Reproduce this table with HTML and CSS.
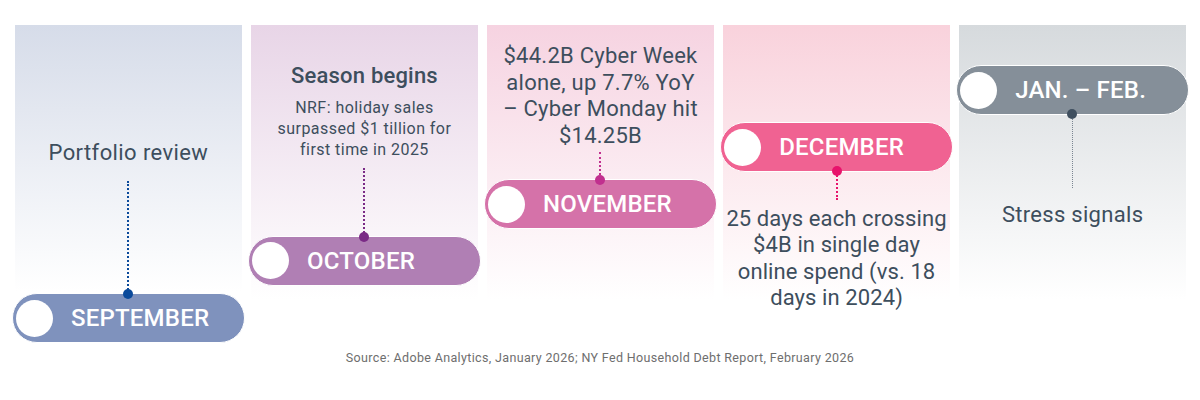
FILE: index.html
```html
<!DOCTYPE html>
<html lang="en">
<head>
<meta charset="utf-8">
<title>Holiday timeline</title>
<link rel="stylesheet" href="styles.css">
</head>
<body>
<div class="timeline">
  <div class="col col-sep">
    <div class="caption cap-sep">Portfolio review</div>
    <div class="connector conn-sep"><span class="dot dot-bottom"></span></div>
    <div class="pill"><span class="knob"></span><span class="label">SEPTEMBER</span></div>
  </div>
  <div class="col col-oct">
    <div class="caption cap-oct">Season begins</div>
    <div class="sub">NRF: holiday sales<br>surpassed $1 tillion for<br>first time in 2025</div>
    <div class="connector conn-oct"><span class="dot dot-bottom"></span></div>
    <div class="pill"><span class="knob"></span><span class="label">OCTOBER</span></div>
  </div>
  <div class="col col-nov">
    <div class="caption cap-nov">$44.2B Cyber Week<br>alone, up 7.7% YoY<br>– Cyber Monday hit<br>$14.25B</div>
    <div class="connector conn-nov"><span class="dot dot-bottom"></span></div>
    <div class="pill"><span class="knob"></span><span class="label">NOVEMBER</span></div>
  </div>
  <div class="col col-dec">
    <div class="pill"><span class="knob"></span><span class="label">DECEMBER</span></div>
    <div class="connector conn-dec"><span class="dot dot-top"></span></div>
    <div class="caption cap-dec">25 days each crossing<br>$4B in single day<br>online spend (vs. 18<br>days in 2024)</div>
  </div>
  <div class="col col-jan">
    <div class="pill"><span class="knob"></span><span class="label">JAN. – FEB.</span></div>
    <div class="connector conn-jan"><span class="dot dot-top"></span></div>
    <div class="caption cap-jan">Stress signals</div>
  </div>
</div>
<p class="source">Source: Adobe Analytics, January 2026; NY Fed Household Debt Report, February 2026</p>
</body>
</html>
```

FILE: styles.css
```css
* { box-sizing: border-box; }
html, body { margin: 0; padding: 0; background: #ffffff; }
body {
  width: 1200px;
  height: 400px;
  font-family: Roboto, "Liberation Sans", sans-serif;
  color: #3d4e5d;
  overflow: hidden;
}
.timeline {
  display: flex;
  gap: 9.25px;
  padding: 25px 14px 0 15px;
}
.col {
  flex: 1;
  height: 275px;
  display: flex;
  flex-direction: column;
  align-items: stretch;
}
.col > * { flex-shrink: 0; }
.col-sep { background: linear-gradient(#d6dce9, #ffffff 97%); padding-top: 115px; --c: #7f92bd; --d: #0b4a9b; }
.col-oct { background: linear-gradient(#e8d5e7, #ffffff 100%); padding-top: 38px; --c: #b07fb4; --d: #7a2a86; }
.col-nov { background: linear-gradient(#f6d3e1, #ffffff 100%); padding-top: 18px; --c: #d572a9; --d: #c1308f; }
.col-dec { background: linear-gradient(#f9d2dc, #ffffff 100%); padding-top: 97px; --c: #f06292; --d: #e8136c; }
.col-jan { background: linear-gradient(#d6dadd, #ffffff 100%); padding-top: 40px; --c: #858f99; --d: #3f4f5f; }

.caption {
  text-align: center;
  font-size: 22px;
  line-height: 26px;
  font-weight: 400;
  letter-spacing: 0.25px;
  white-space: nowrap;
}
.cap-sep { letter-spacing: 0.4px; }
.cap-oct { font-weight: 500; letter-spacing: 0.2px; }
.cap-nov { line-height: 26.6px; }
.cap-dec { line-height: 26.4px; padding-top: 6px; letter-spacing: 0.1px; }
.cap-jan { padding-top: 14px; letter-spacing: 0.3px; }
.sub {
  text-align: center;
  font-size: 16px;
  line-height: 21.2px;
  letter-spacing: 0.45px;
  padding-top: 8px;
  white-space: nowrap;
}
.connector {
  position: relative;
  align-self: center;
  width: 0;
  border-left: 2px dotted var(--d);
}
.conn-sep { height: 112px; margin-top: 15px; }
.conn-oct { height: 68px; margin-top: 7px; }
.conn-nov { height: 27px; margin-top: 3px; }
.conn-dec { height: 28px; }
.conn-jan { height: 73px; border-left-width: 1.5px; border-left-color: #7a8591; }
.dot {
  position: absolute;
  left: -6px;
  width: 10px;
  height: 10px;
  border-radius: 50%;
  background: var(--d);
  z-index: 2;
}
.dot-bottom { bottom: -6px; }
.dot-top { top: -6px; }

.pill {
  position: relative;
  margin: 0 -3px;
  height: 50px;
  border-radius: 25px;
  border: 1px solid #ffffff;
  background: var(--c);
  display: flex;
  align-items: center;
  padding-left: 3px;
}
.knob {
  width: 37px;
  height: 37px;
  border-radius: 50%;
  background: #ffffff;
  flex: none;
}
.label {
  margin-left: 18px;
  color: #ffffff;
  font-size: 24px;
  font-weight: 500;
  letter-spacing: 0.2px;
}
.source {
  margin: 50px 0 0;
  text-align: center;
  font-size: 12.5px;
  color: #6e6e6e;
  letter-spacing: 0.35px;
}
```
